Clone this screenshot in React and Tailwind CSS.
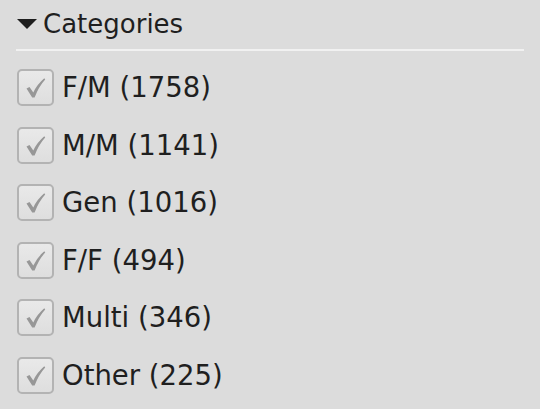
const categories = [
  { name: 'F/M', count: 1758 },
  { name: 'M/M', count: 1141 },
  { name: 'Gen', count: 1016 },
  { name: 'F/F', count: 494 },
  { name: 'Multi', count: 346 },
  { name: 'Other', count: 225 },
];

function CheckBox() {
  return (
    <span className="flex h-[37px] w-[37px] shrink-0 items-center justify-center rounded-[5px] border-2 border-[#b3b3b3] bg-gradient-to-b from-[#e9e9e9] to-[#dedede]">
      <svg width="37" height="37" viewBox="0 0 37 37" className="-m-[2px]">
        <path
          d="M9.5 19.5 L12.5 18 L16.3 23.5 Q20 15.5 27.3 9.3 L28.2 10.5 Q21.8 17.5 17.6 28.5 L15.2 28.5 Z"
          fill="#979797"
        />
      </svg>
    </span>
  );
}

export default function App() {
  return (
    <div className="h-[409px] w-[540px] overflow-hidden bg-[#dcdcdc] font-['DejaVu_Sans',sans-serif] text-[#1f1f1f]">
      <div className="mx-[16px] flex items-center border-b-2 border-[#f1f1f1] pb-[7px] pt-[6px]">
        <svg width="20" height="10" viewBox="0 0 20 10" className="ml-px mr-[6px]">
          <path d="M0 0 H20 L10 10 Z" fill="#1e1e1e" />
        </svg>
        <span className="text-[26px] leading-[36px]">Categories</span>
      </div>
      <div className="mt-[18px] flex flex-col gap-[20.6px] pl-[17px]">
        {categories.map((c) => (
          <div key={c.name} className="flex items-center gap-[8px]">
            <CheckBox />
            <span className="text-[27.5px] leading-[37px]">
              {c.name} ({c.count})
            </span>
          </div>
        ))}
      </div>
    </div>
  );
}
